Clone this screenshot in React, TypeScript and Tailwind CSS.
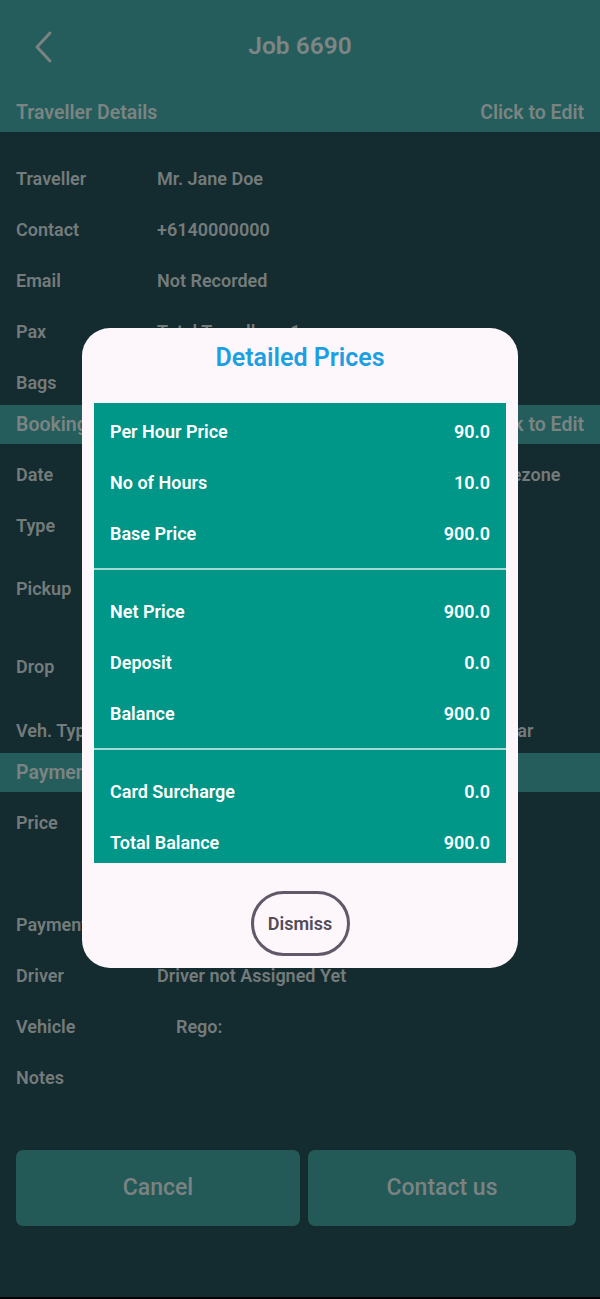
import React from "react";

type Row = { label: string; value?: string; cls: string; valueCls?: string };

const travellerRows: Row[] = [
  { label: "Traveller", value: "Mr. Jane Doe", cls: "mt-[35px]" },
  { label: "Contact", value: "+6140000000", cls: "mt-[27px]" },
  { label: "Email", value: "Not Recorded", cls: "mt-[27px]" },
  { label: "Pax", value: "Total Travellers: 1", cls: "mt-[27px]" },
  { label: "Bags", value: "0", cls: "mt-[27px]" },
];

const bookingRows: Row[] = [
  { label: "Date", value: "Thu, 14 Mar 2024 at 09:30 AM - Sydney Timezone", cls: "mt-[19px]" },
  { label: "Type", value: "Hourly", cls: "mt-[27px]" },
  { label: "Pickup", value: "Sydney Airport", cls: "mt-[39px]" },
  { label: "Drop", value: "Sydney CBD", cls: "mt-[54px]" },
  { label: "Veh. Type", value: "Premium Executive Sedans (1-4 Pax) - Regular", cls: "mt-[40px]" },
];

const paymentRows: Row[] = [
  { label: "Price", value: "900.0", cls: "mt-[19px]" },
  { label: "Payment", value: "Pending", cls: "mt-[78px]" },
  { label: "Driver", value: "Driver not Assigned Yet", cls: "mt-[27px]" },
  { label: "Vehicle", value: "Rego:", cls: "mt-[27px]", valueCls: "pl-[19px]" },
  { label: "Notes", cls: "mt-[27px]" },
];

const priceGroups = [
  {
    cls: "pt-[17px] pb-[22px]",
    rows: [
      ["Per Hour Price", "90.0"],
      ["No of Hours", "10.0"],
      ["Base Price", "900.0"],
    ],
  },
  {
    cls: "pt-[30px] pb-[22px]",
    rows: [
      ["Net Price", "900.0"],
      ["Deposit", "0.0"],
      ["Balance", "900.0"],
    ],
  },
  {
    cls: "pt-[30px] pb-[8px]",
    rows: [
      ["Card Surcharge", "0.0"],
      ["Total Balance", "900.0"],
    ],
  },
];

function SectionBar({ title, edit }: { title: string; edit?: boolean }) {
  return (
    <div className="h-[39px] bg-[#245d5b] px-4 flex items-center justify-between text-[19.5px] font-semibold text-[#7b8483]">
      <span>{title}</span>
      {edit && <span>Click to Edit</span>}
    </div>
  );
}

function Rows({ rows, pb }: { rows: Row[]; pb: string }) {
  return (
    <div className={`flex flex-col px-4 ${pb}`}>
      {rows.map((r) => (
        <div key={r.label} className={`flex leading-[24px] text-[18px] font-semibold text-[#747b7b] ${r.cls}`}>
          <span className="w-[141px] shrink-0">{r.label}</span>
          <span className={`whitespace-nowrap ${r.valueCls ?? ""}`}>{r.value}</span>
        </div>
      ))}
    </div>
  );
}

export default function App() {
  return (
    <div
      className="relative w-[600px] h-[1299px] overflow-hidden bg-[#142b30] flex flex-col"
      style={{ fontFamily: "Roboto, 'Noto Sans', sans-serif" }}
    >
      <div className="h-[93px] bg-[#245d5b] relative flex items-center justify-center">
        <svg
          className="absolute left-[32px] top-[30px]"
          width="24"
          height="34"
          viewBox="0 0 24 34"
          fill="none"
          stroke="#7b8282"
          strokeWidth="3"
          strokeLinecap="round"
          strokeLinejoin="round"
        >
          <path d="M18 3 L5 17 L18 31" />
        </svg>
        <span className="text-[24.5px] font-semibold text-[#7d8585]">Job 6690</span>
      </div>

      <SectionBar title="Traveller Details" edit />
      <Rows rows={travellerRows} pb="pb-[10px]" />

      <SectionBar title="Booking Details" edit />
      <Rows rows={bookingRows} pb="pb-[10px]" />

      <SectionBar title="Payment Details" />
      <Rows rows={paymentRows} pb="" />

      <div className="mt-[60px] px-4 flex gap-2">
        <button className="w-[284px] h-[76px] rounded-[7px] bg-[#235a58] text-[23px] font-medium text-[#7b8382]">
          Cancel
        </button>
        <button className="w-[268px] h-[76px] rounded-[7px] bg-[#235a58] text-[23px] font-medium text-[#7b8382]">
          Contact us
        </button>
      </div>

      <div className="flex-1" />
      <div className="h-[2px] bg-black" />

      {/* dialog */}
      <div className="absolute left-[82px] top-[328px] w-[436px] h-[640px] rounded-[28px] bg-[#fdf7fc] flex flex-col items-center pt-[15px]">
        <h2 className="text-[25px] leading-[30px] font-semibold text-[#1d9fe2]">Detailed Prices</h2>
        <div className="mt-[30px] w-[412px] bg-[#009688] flex flex-col">
          {priceGroups.map((g, gi) => (
            <div
              key={gi}
              className={`flex flex-col gap-[27px] px-4 ${g.cls} ${gi > 0 ? "border-t-2 border-[#a3dbd4]" : ""}`}
            >
              {g.rows.map(([label, val]) => (
                <div key={label} className="flex justify-between leading-[24px] text-[18px] font-semibold text-white">
                  <span>{label}</span>
                  <span>{val}</span>
                </div>
              ))}
            </div>
          ))}
        </div>
        <button className="mt-[28px] w-[99px] h-[65px] rounded-full border-[3px] border-[#5f5968] text-[18px] font-semibold text-[#524c59]">
          Dismiss
        </button>
      </div>
    </div>
  );
}
